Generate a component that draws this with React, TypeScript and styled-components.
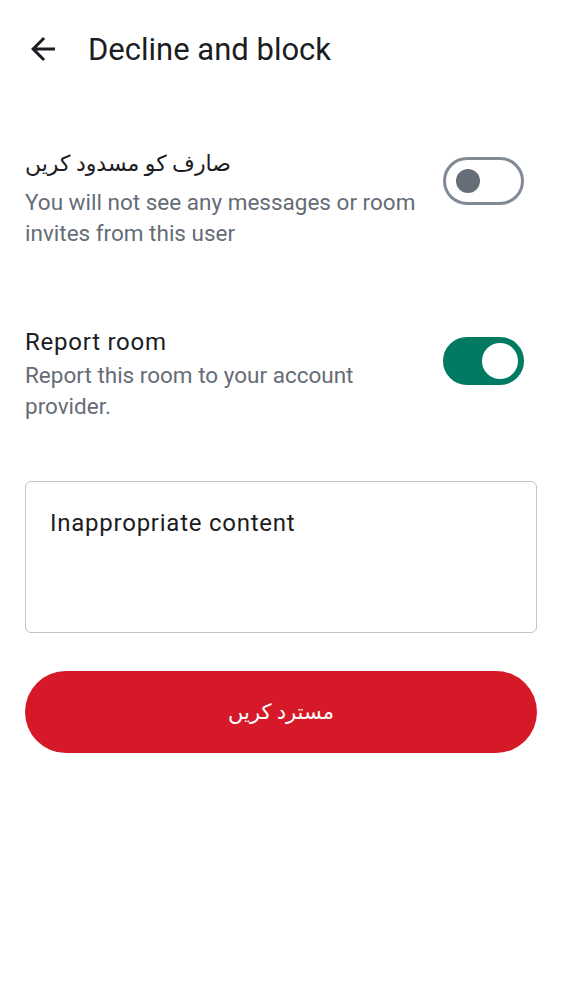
import React from "react";
import styled, { createGlobalStyle } from "styled-components";

const GlobalStyle = createGlobalStyle`
  html, body {
    margin: 0;
    padding: 0;
    background: #ffffff;
  }
  body {
    font-family: Roboto, "DejaVu Sans", sans-serif;
    color: #1b1d22;
  }
`;

const Screen = styled.div`
  width: 562px;
  height: 1000px;
  background: #ffffff;
  display: flex;
  flex-direction: column;
`;

const TopBar = styled.header`
  height: 98px;
  display: flex;
  align-items: center;
  padding-left: 25px;
  gap: 27px;
`;

const BackButton = styled.button`
  width: 36px;
  height: 36px;
  border: none;
  background: transparent;
  padding: 0;
  display: flex;
  align-items: center;
  justify-content: center;
  color: #1b1d22;
`;

const Title = styled.h1`
  margin: 0;
  font-size: 31px;
  font-weight: 400;
  color: #1b1d22;
  letter-spacing: 0;
`;

const Content = styled.main`
  display: flex;
  flex-direction: column;
  padding: 0 25px;
`;

const Row = styled.div<{ $top: number }>`
  display: flex;
  align-items: flex-start;
  gap: 16px;
  padding-right: 13px;
  margin-top: ${(p) => p.$top}px;
`;

const TextCol = styled.div`
  flex: 1;
  display: flex;
  flex-direction: column;
`;

const RowTitle = styled.div<{ $urdu?: boolean }>`
  font-size: ${(p) => (p.$urdu ? 22 : 24)}px;
  line-height: ${(p) => (p.$urdu ? 39 : 36)}px;
  padding-bottom: ${(p) => (p.$urdu ? 4 : 0)}px;
  letter-spacing: ${(p) => (p.$urdu ? 0 : 0.75)}px;
  color: #1b1d22;
  text-align: left;
`;

const RowSub = styled.div`
  font-size: 22.5px;
  line-height: 31px;
  color: #656c76;
`;

const Track = styled.div<{ $on: boolean }>`
  flex: none;
  box-sizing: border-box;
  width: 81px;
  height: 48px;
  margin-top: 13px;
  border-radius: 24px;
  border: 3px solid ${(p) => (p.$on ? "#007a61" : "#818a95")};
  background: ${(p) => (p.$on ? "#007a61" : "#ffffff")};
  display: flex;
  align-items: center;
  justify-content: ${(p) => (p.$on ? "flex-end" : "flex-start")};
  padding: 0 ${(p) => (p.$on ? "3px" : "10px")};
`;

const Thumb = styled.div<{ $on: boolean }>`
  width: ${(p) => (p.$on ? 36 : 24)}px;
  height: ${(p) => (p.$on ? 36 : 24)}px;
  border-radius: 50%;
  background: ${(p) => (p.$on ? "#ffffff" : "#656d77")};
`;

const TextField = styled.div`
  margin-top: 59px;
  height: 152px;
  box-sizing: border-box;
  border: 1.5px solid #c0c4cb;
  border-radius: 6px;
  padding: 24px 24px;
  font-size: 24px;
  line-height: 34px;
  letter-spacing: 0.75px;
  color: #1b1d22;
`;

const DangerButton = styled.button`
  margin-top: 38px;
  height: 82px;
  width: 100%;
  border: none;
  border-radius: 41px;
  background: #d51928;
  color: #ffffff;
  font-family: Roboto, "DejaVu Sans", sans-serif;
  font-size: 21px;
  display: flex;
  align-items: center;
  justify-content: center;
`;

const Toggle = ({ on }: { on: boolean }) => (
  <Track $on={on}>
    <Thumb $on={on} />
  </Track>
);

export default function App() {
  return (
    <Screen>
      <GlobalStyle />
      <TopBar>
        <BackButton aria-label="Back">
          <svg width="36" height="36" viewBox="0 0 24 24" fill="currentColor">
            <path d="M20 11H7.83l5.59-5.59L12 4l-8 8 8 8 1.41-1.41L7.83 13H20v-2z" />
          </svg>
        </BackButton>
        <Title>Decline and block</Title>
      </TopBar>
      <Content>
        <Row $top={46}>
          <TextCol>
            <RowTitle $urdu dir="rtl">صارف کو مسدود کریں</RowTitle>
            <RowSub>You will not see any messages or room invites from this user</RowSub>
          </TextCol>
          <Toggle on={false} />
        </Row>
        <Row $top={75}>
          <TextCol>
            <RowTitle>Report room</RowTitle>
            <RowSub>Report this room to your account provider.</RowSub>
          </TextCol>
          <Toggle on={true} />
        </Row>
        <TextField>Inappropriate content</TextField>
        <DangerButton>مسترد کریں</DangerButton>
      </Content>
    </Screen>
  );
}
